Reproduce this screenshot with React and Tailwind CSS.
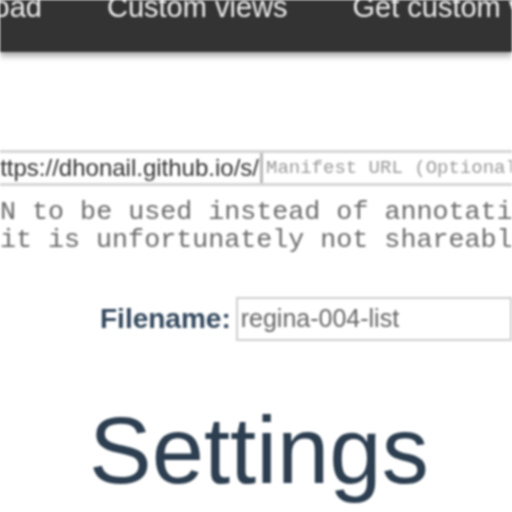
import React from 'react';

const navItems = ["Download", "Custom views", "Get custom views"];

const App = () => {
  return (
    <div className="w-[512px] h-[512px] overflow-hidden bg-white blur-[1.2px]" style={{ fontFamily: '"Liberation Sans", Arial, sans-serif' }}>
      {/* top nav */}
      <div className="h-[52px] bg-[#333333] shadow-[0_4px_6px_rgba(0,0,0,0.35)] relative z-10 overflow-hidden">
        <div className="flex items-start gap-[65px] -mt-[11px] -ml-[87px] whitespace-nowrap text-[29px] leading-[36px] text-[#eeeeee]">
          {navItems.map(item => (
            <span key={item}>{item}</span>
          ))}
        </div>
      </div>

      {/* manifest inputs */}
      <div className="mt-[98px] flex h-[36px] border-y-[3px] border-[#d6d6d6] w-[540px]">
        <div className="w-[263px] shrink-0 border-r-[3px] border-[#b8b8b8] flex items-center overflow-hidden whitespace-nowrap text-[24px] text-[#333] justify-end pr-[1px]">
          https://dhonail.github.io/s/
        </div>
        <div className="flex items-center pl-[3px] whitespace-nowrap overflow-hidden text-[19px] text-[#9a9a9a]" style={{ fontFamily: '"Liberation Mono", monospace' }}>
          Manifest URL (Optional)
        </div>
      </div>

      {/* hint text */}
      <div className="mt-[12px] whitespace-nowrap text-[26.7px] leading-[28px] text-[#6a6a6a]" style={{ fontFamily: '"Liberation Mono", monospace' }}>
        <div className="-ml-[48px]">JSON to be used instead of annotation</div>
        <div>it is unfortunately not shareable</div>
      </div>

      {/* filename */}
      <div className="mt-[43px] ml-[100px] flex items-center h-[44px]">
        <span className="text-[28px] font-bold text-[#34495e]">Filename:</span>
        <div className="ml-[5px] h-[44px] w-[300px] border-2 border-[#cfcfcf] flex items-center pl-[3px] text-[25px] text-[#666] whitespace-nowrap">
          regina-004-list
        </div>
      </div>

      {/* heading */}
      <h1 className="mt-[60px] ml-[89px] text-[94px] leading-[100px] text-[#2c3e50]">Settings</h1>
    </div>
  );
};

export default App;
